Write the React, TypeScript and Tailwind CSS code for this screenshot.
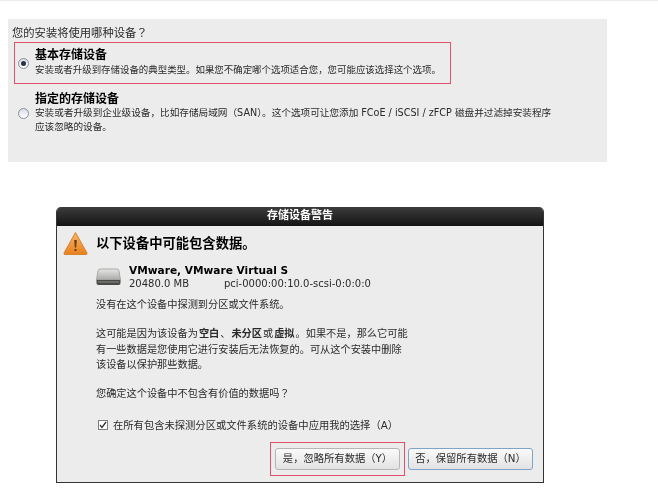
const cjk = "font-['DejaVu_Sans','Noto_Sans_CJK_SC',sans-serif]";
// TC centres the full-width question mark the way the screenshot does
const fullQ = "font-['Noto_Sans_CJK_TC',sans-serif]";

function Radio({ checked }: { checked?: boolean }) {
  return (
    <span className="flex h-[11px] w-[11px] shrink-0 items-center justify-center rounded-full border border-[#8a8f99] bg-[linear-gradient(#d9dde6,#ffffff)]">
      {checked && <span className="h-[5px] w-[5px] rounded-full bg-[#2c3347]" />}
    </span>
  );
}

function WarningIcon() {
  return (
    <svg width="25" height="25" viewBox="0 0 25 25" className="shrink-0">
      <defs>
        <linearGradient id="warn" x1="0" y1="0" x2="0" y2="1">
          <stop offset="0" stopColor="#f6b768" />
          <stop offset="1" stopColor="#e8801f" />
        </linearGradient>
      </defs>
      <path d="M12.5 1.5 L24 22 Q24.3 23.5 23 23.5 L2 23.5 Q0.7 23.5 1 22 Z" fill="url(#warn)" stroke="#d9822b" strokeWidth="1" strokeLinejoin="round" />
      <path d="M11.2 9 L13.8 9 L13.2 16.5 L11.8 16.5 Z" fill="#6b3a10" />
      <rect x="11.5" y="18" width="2" height="2" fill="#6b3a10" />
    </svg>
  );
}

function DiskIcon() {
  return (
    <svg width="25" height="20" viewBox="0 0 25 20" className="shrink-0">
      <defs>
        <linearGradient id="disk" x1="0" y1="0" x2="0" y2="1">
          <stop offset="0" stopColor="#e6e6e6" />
          <stop offset="1" stopColor="#a9a9a6" />
        </linearGradient>
      </defs>
      <path d="M4 2 L21 2 Q22.5 2 23 4 L24.5 13 L0.5 13 L2 4 Q2.5 2 4 2 Z" fill="url(#disk)" stroke="#9a9a98" strokeWidth="0.8" />
      <path d="M0.5 13 L24.5 13 L24.5 16 Q24.5 18 22.5 18 L2.5 18 Q0.5 18 0.5 16 Z" fill="#4a4a48" />
      <rect x="2" y="14.5" width="21" height="1" fill="#8d8d8a" />
    </svg>
  );
}

export default function App() {
  return (
    <div className={`h-[492px] w-[658px] overflow-hidden border-t border-[#ececec] bg-white text-[#2a2a2a] blur-[0.35px] ${cjk}`}>
      {/* top panel: device type choice */}
      <div className="ml-[8px] mt-[18px] h-[143px] w-[599px] bg-[#ececec] pl-[4px] pt-[7px]">
        <div className="text-[11.3px] leading-[13px]">
          您的安装将使用哪种设备<span className={fullQ}>？</span>
        </div>
        <div className="ml-[2px] mt-[2px] flex h-[42px] w-[437px] items-center gap-[6px] border border-[#e2506a] pl-[3px]">
          <Radio checked />
          <div className="pb-[2px]">
            <div className="text-[12px] font-bold leading-[15px] text-black">基本存储设备</div>
            <div className="text-[9.45px] leading-[13px]">安装或者升级到存储设备的典型类型。如果您不确定哪个选项适合您，您可能应该选择这个选项。</div>
          </div>
        </div>
        <div className="ml-[6px] mt-[8px] flex items-start gap-[6px]">
          <span className="mt-[16px]">
            <Radio />
          </span>
          <div>
            <div className="text-[12px] font-bold leading-[14px] text-black">指定的存储设备</div>
            <div className="whitespace-nowrap text-[9.63px] leading-[14px]">
              安装或者升级到企业级设备，比如存储局域网（SAN）。这个选项可让您添加 FCoE / iSCSI / zFCP 磁盘并过滤掉安装程序
              <br />
              应该忽略的设备。
            </div>
          </div>
        </div>
      </div>

      {/* warning dialog */}
      <div className="ml-[56px] mt-[45px] flex h-[276px] w-[488px] flex-col overflow-hidden rounded-t-[5px] border-x border-b border-[#333] bg-[#ececec]">
        <div className="flex h-[19px] shrink-0 items-center justify-center bg-[linear-gradient(#3c3c3c,#141414)] text-[11px] font-bold text-white">
          存储设备警告
        </div>
        <div className="flex items-center gap-[8px] pl-[6px] pt-[5px]">
          <WarningIcon />
          <div className="text-[13.3px] font-bold text-black">以下设备中可能包含数据。</div>
        </div>
        <div className="ml-[39px] mt-[7px] flex items-center gap-[8px]">
          <DiskIcon />
          <div className="leading-[14px]">
            <div className="text-[10.6px] font-bold text-black">VMware, VMware Virtual S</div>
            <div className="flex text-[10px]">
              <span className="w-[95px]">20480.0 MB</span>
              <span>pci-0000:00:10.0-scsi-0:0:0:0</span>
            </div>
          </div>
        </div>
        <div className="ml-[39px] mt-[6px] text-[10.2px] leading-[16px]">没有在这个设备中探测到分区或文件系统。</div>
        <div className="ml-[39px] mt-[13px] whitespace-nowrap text-[10.2px] leading-[15.5px]">
          这可能是因为该设备为<b className="mx-[1px]">空白</b>、<b className="mx-[1px]">未分区</b>或<b className="mx-[1px]">虚拟</b>。如果不是，那么它可能
          <br />
          有一些数据是您使用它进行安装后无法恢复的。可从这个安装中删除
          <br />
          该设备以保护那些数据。
        </div>
        <div className="ml-[39px] mt-[12px] text-[10.2px] leading-[16px]">
          您确定这个设备中不包含有价值的数据吗<span className={fullQ}>？</span>
        </div>
        <div className="ml-[41px] mt-[15px] flex items-center gap-[5px] text-[10.3px] leading-[16px]">
          <span className="flex h-[10px] w-[10px] items-center justify-center border border-[#7d7d7d] bg-white">
            <svg width="8" height="8" viewBox="0 0 8 8"><path d="M1 4 L3 6.5 L7 1" fill="none" stroke="#333" strokeWidth="1.3" /></svg>
          </span>
          在所有包含未探测分区或文件系统的设备中应用我的选择（A）
        </div>
        <div className="mr-[10px] mt-[9px] flex items-center justify-end gap-[3px]">
          <div className="flex h-[34px] w-[135px] items-center justify-center border border-[#e2506a]">
            <button className="h-[22px] w-[125px] rounded-[3px] border border-[#b5b5b5] bg-[linear-gradient(#fafafa,#e2e2e2)] text-[10.3px]">是，忽略所有数据（Y）</button>
          </div>
          <button className="h-[22px] w-[125px] rounded-[3px] border border-[#7fa4c9] bg-[linear-gradient(#fafafa,#e2e2e2)] text-[10.3px]">否，保留所有数据（N）</button>
        </div>
      </div>
    </div>
  );
}
